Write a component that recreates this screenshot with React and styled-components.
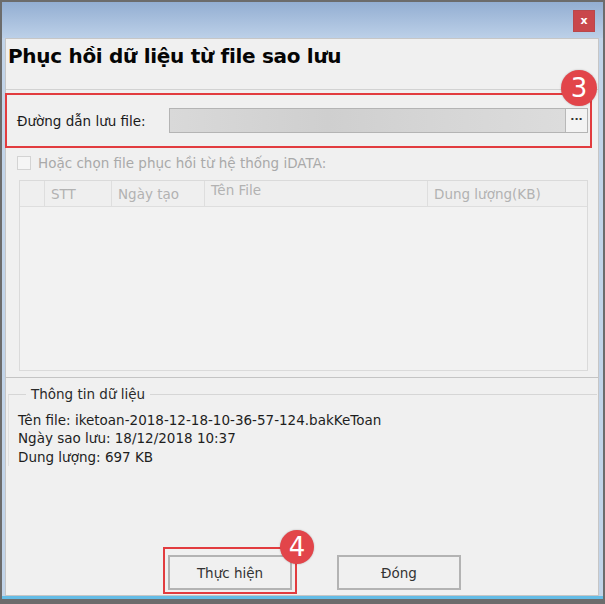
import React from 'react';
import styled, { createGlobalStyle } from 'styled-components';

const GlobalStyle = createGlobalStyle`
  html, body {
    margin: 0;
    padding: 0;
    background: #ffffff;
  }
  body {
    font-family: 'DejaVu Sans', 'Noto Sans', sans-serif;
  }
  * { box-sizing: border-box; }
`;

const Frame = styled.div`
  width: 605px;
  height: 604px;
  border: 2px solid #6c6c6c;
  border-bottom-width: 5px;
  padding: 0 4px 3px 3px;
  background: linear-gradient(to top, #64bce6 0 3px, #c2d4e9 3px);
  display: flex;
  flex-direction: column;
`;

const TitleBar = styled.div`
  height: 36px;
  margin: 0 -4px 0 -3px;
  padding-right: 8px;
  background: linear-gradient(to bottom, #93aed2, #bcd0e8);
  display: flex;
  justify-content: flex-end;
  align-items: center;
`;

const CloseButton = styled.button`
  width: 22px;
  height: 22px;
  margin-top: 2px;
  border: 1px solid #b9474a;
  background: #c9474b;
  color: #ffffff;
  font: bold 11px 'DejaVu Sans', sans-serif;
  padding: 0 0 2px;
  cursor: pointer;
`;

const Content = styled.div`
  flex: 1;
  display: flex;
  flex-direction: column;
  background: #f0f0f0;
  border: 1px solid #c6c6c6;
  position: relative;
`;

const Header = styled.div`
  height: 51px;
  padding: 5px 0 0 2px;
  border-bottom: 1px solid #d2d2d2;
  font: bold 20px 'DejaVu Sans', sans-serif;
  color: #050505;
  letter-spacing: -0.3px;
`;

const MainPanel = styled.div`
  padding: 3px 6px 6px 0;
  border-bottom: 1px solid #c4c4c4;
  margin-left: -1px;
`;

const Highlight = styled.div`
  position: relative;
  border: 2px solid #e23c3f;
`;

const PathBox = styled(Highlight)`
  height: 55px;
  display: flex;
  align-items: center;
  padding: 0 2px 0 10px;
`;

const Badge = styled.div`
  position: absolute;
  width: ${(p) => p.size}px;
  height: ${(p) => p.size}px;
  border-radius: 50%;
  background: #e2454a;
  color: #ffffff;
  font: 26px 'DejaVu Sans', sans-serif;
  display: flex;
  align-items: center;
  justify-content: center;
  box-shadow: 0 0 2px rgba(0, 0, 0, 0.25);
  z-index: 2;
`;

const Label = styled.span`
  width: 152px;
  font-size: 13.5px;
  color: #1a1a1a;
`;

const PathInput = styled.div`
  flex: 1;
  height: 25px;
  display: flex;
  border: 1px solid #b4b4b4;
  background: linear-gradient(to bottom, #d6d6d6, #dedede 50%, #d8d8d8);
`;

const Blur = styled.div`
  flex: 1;
  background: linear-gradient(to right, #d9d9d9, #cfcfcf 40%, #d6d6d6 70%, #dcdcdc);
`;

const BrowseButton = styled.div`
  width: 22px;
  border-left: 1px solid #b8b8b8;
  background: #f3f3f3;
  color: #333333;
  font: bold 11px 'DejaVu Sans', sans-serif;
  display: flex;
  align-items: center;
  justify-content: center;
  padding-bottom: 3px;
`;

const CheckRow = styled.label`
  display: flex;
  align-items: center;
  gap: 7px;
  margin: 7px 0 0 12px;
  font-size: 13.5px;
  color: #a9a9a9;
`;

const CheckBox = styled.span`
  width: 14px;
  height: 14px;
  border: 1px solid #d3d3d3;
  background: #f5f5f5;
`;

const Grid = styled.div`
  margin: 9px 4px 0 14px;
  height: 191px;
  border: 1px solid #dadada;
  background: #f2f2f2;
  display: flex;
  flex-direction: column;
`;

const GridHeader = styled.div`
  height: 26px;
  display: grid;
  grid-template-columns: 25px 67px 93px 223px 1fr;
  border-bottom: 1px solid #dedede;
  background: #efefef;
`;

const HeadCell = styled.div`
  border-right: 1px solid #dedede;
  padding: ${(p) => (p.high ? '1px' : '5px')} 0 0 6px;
  font-size: 13.5px;
  color: #b2b2b2;
  &:last-child { border-right: none; }
`;

const InfoGroup = styled.fieldset`
  margin: 7px 1px 0 2px;
  padding: 7px 0 0 9px;
  border: none;
  border-top: 1px solid #d6d6d6;
  border-left: 1px solid #e0e0e0;
  font-size: 13.5px;
  color: #1e1e1e;
  line-height: 18.5px;
`;

const Legend = styled.legend`
  padding: 0 5px;
  margin-left: 8px;
  font-size: 13.5px;
  color: #2a2a2a;
`;

const ButtonRow = styled.div`
  margin-top: auto;
  padding: 0 0 1px 157px;
  display: flex;
  align-items: flex-end;
  gap: 40px;
`;

const ButtonBox = styled(Highlight)`
  padding: 6px 3px 2px 3px;
`;

const Button = styled.button`
  width: 124px;
  height: 35px;
  border: 2px solid #b3b3b3;
  background: #f0f0f0;
  color: #333333;
  font: 13.5px 'DejaVu Sans', sans-serif;
  margin-bottom: ${(p) => (p.plain ? '4px' : '0')};
  cursor: pointer;
`;

const columns = ['', 'STT', 'Ngày tạo', 'Tên File', 'Dung lượng(KB)'];

const info = [
  'Tên file: iketoan-2018-12-18-10-36-57-124.bakKeToan',
  'Ngày sao lưu: 18/12/2018 10:37',
  'Dung lượng: 697 KB',
];

export default function App() {
  return (
    <>
      <GlobalStyle />
      <Frame>
        <TitleBar>
          <CloseButton>x</CloseButton>
        </TitleBar>
        <Content>
          <Header>Phục hồi dữ liệu từ file sao lưu</Header>
          <MainPanel>
            <PathBox>
              <Label>Đường dẫn lưu file:</Label>
              <PathInput>
                <Blur />
                <BrowseButton>···</BrowseButton>
              </PathInput>
              <Badge size={36} style={{ right: -7, top: -25 }}>3</Badge>
            </PathBox>
            <CheckRow>
              <CheckBox />
              Hoặc chọn file phục hồi từ hệ thống iDATA:
            </CheckRow>
            <Grid>
              <GridHeader>
                {columns.map((c) => (
                  <HeadCell key={c} high={c === 'Tên File'}>{c}</HeadCell>
                ))}
              </GridHeader>
            </Grid>
          </MainPanel>
          <InfoGroup>
            <Legend>Thông tin dữ liệu</Legend>
            {info.map((line) => (
              <div key={line}>{line}</div>
            ))}
          </InfoGroup>
          <ButtonRow>
            <ButtonBox>
              <Button>Thực hiện</Button>
              <Badge size={34} style={{ right: -19, top: -19 }}>4</Badge>
            </ButtonBox>
            <Button plain>Đóng</Button>
          </ButtonRow>
        </Content>
      </Frame>
    </>
  );
}
